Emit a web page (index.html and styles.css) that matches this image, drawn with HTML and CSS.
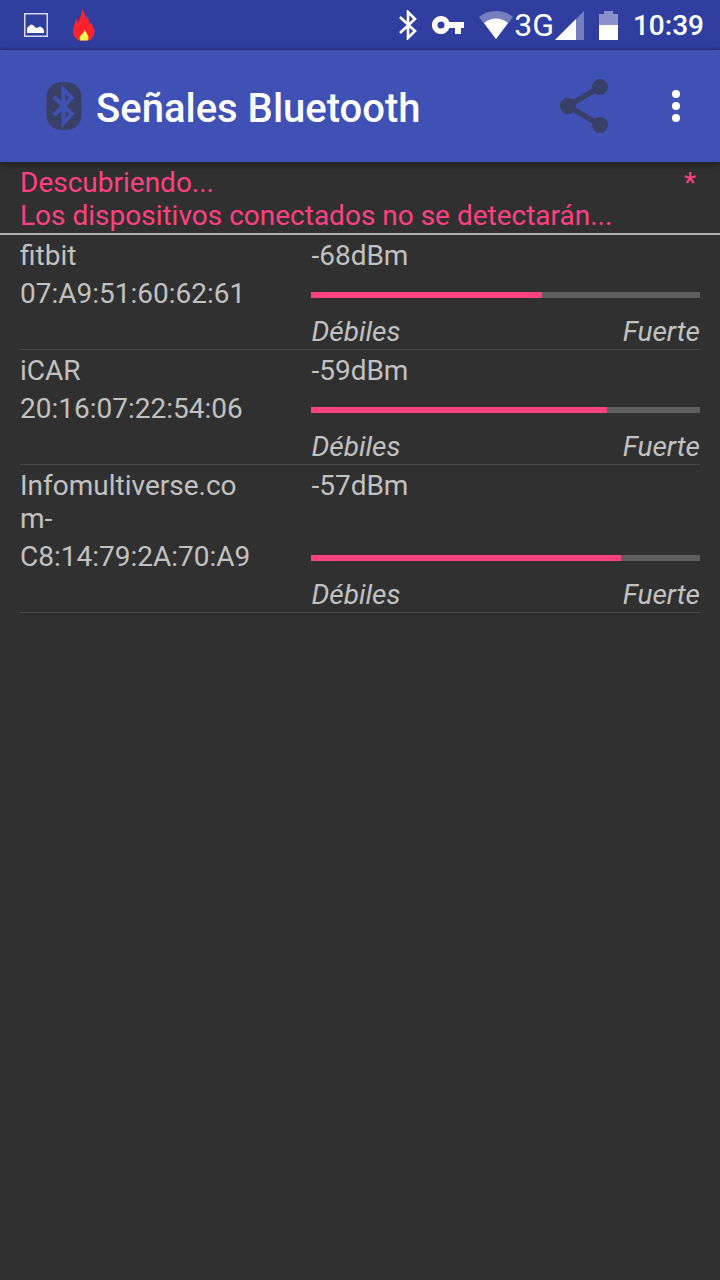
FILE: index.html
```html
<!DOCTYPE html>
<html lang="es">
<head>
    <meta charset="UTF-8">
    <meta name="viewport" content="width=device-width, initial-scale=1.0">
    <title>Señales Bluetooth</title>
    <link rel="stylesheet" href="styles.css">
</head>
<body>
    <div class="status-bar">
        <div class="notifications">
            <svg width="24" height="24" viewBox="0 0 24 24">
                <rect x="0.75" y="0.75" width="22.5" height="22.5" fill="none" stroke="#d6d9ec" stroke-width="1.5"/>
                <path d="M3 20v-5l2-2 2-1.500 2 .5 3 3 2-.5 2-1 2 1 2 2.500v3z" fill="#fff"/>
            </svg>
            <svg width="24" height="32" viewBox="0 0 24 32">
                <path d="M10.500 0C11 3 14 6 14.500 10L16 6c.5 5 1 7 2.500 9l1-2c0 4 3 6 3 10 0 4-3 6.500-5 8.500H6C3 29 1 26 1 22.500 1 18 3 15 4.500 9c.5 1.500 1 3 1.500 5l1.500-3C8.500 8 9.500 4 10.500 0z" fill="#ff212b"/>
                <path d="M12.500 21c2 3 4 5 4 8 0 1-.5 2-1 2.500H8c-1-3 0-5 2-6.500 1.500-1.500 2-2.500 2.500-4z" fill="#fff550"/>
            </svg>
        </div>
        <div class="system-icons">
            <svg width="18" height="30" viewBox="0 0 18 30">
                <path d="M1 7l15 14-7 7V2l7 7L1 23" fill="none" stroke="#fff" stroke-width="2.600"/>
            </svg>
            <svg width="32" height="18" viewBox="0 0 32 18">
                <path fill-rule="evenodd" fill="#fff" d="M9 0a9 9 0 0 1 8.400 6H32v6h-3v6h-6v-6h-5.600A9 9 0 1 1 9 0zm0 5.500a3.500 3.500 0 1 0 0 7 3.500 3.500 0 0 0 0-7z"/>
            </svg>
            <div class="network">
                <svg width="34" height="28" viewBox="0 0 34 28">
                    <path d="M17 28L0 6C9-2 25-2 34 6z" fill="#767fbe"/>
                    <path d="M17 28L5 12c7-6 17-6 24 0z" fill="#fff"/>
                </svg>
                <span class="network-type">3G</span>
                <svg width="29" height="29" viewBox="0 0 29 29">
                    <path d="M0 29L29 0v29z" fill="#767fbe"/>
                    <path d="M0 29L21 8v21z" fill="#fff"/>
                </svg>
            </div>
            <svg width="19" height="29" viewBox="0 0 19 29">
                <path d="M0 3h5V0h9v3h5v12H0z" fill="#8a91c8"/>
                <path d="M0 14h19v15H0z" fill="#fff"/>
            </svg>
            <span class="clock">10:39</span>
        </div>
    </div>

    <header class="app-bar">
        <svg width="36" height="48" viewBox="0 0 36 48">
            <path d="M18 0c12 0 17.500 6 17.500 16v16c0 10-5.500 16-17.500 16S.5 42 .5 32V16C.5 6 6 0 18 0z" fill="#394068"/>
            <path d="M8 15l18 17-8.500 9V7L26 16 8 33" fill="none" stroke="#3f51b5" stroke-width="3.800"/>
        </svg>
        <h1>Señales Bluetooth</h1>
        <button class="icon-button" type="button" aria-label="Compartir">
            <svg width="48" height="54" viewBox="0 0 48 54">
                <path d="M40 8L8 27l32 19" fill="none" stroke="#394068" stroke-width="5.500"/>
                <g fill="#394068">
                    <circle cx="40" cy="8" r="8"/>
                    <circle cx="8" cy="27" r="8"/>
                    <circle cx="40" cy="46" r="8"/>
                </g>
            </svg>
        </button>
        <button class="icon-button" type="button" aria-label="Más opciones">
            <svg width="8" height="32" viewBox="0 0 8 32" fill="#fff">
                <circle cx="4" cy="4" r="4"/>
                <circle cx="4" cy="16" r="4"/>
                <circle cx="4" cy="28" r="4"/>
            </svg>
        </button>
    </header>

    <main>
        <div class="scan-status">
            <p>Descubriendo...<br>Los dispositivos conectados no se detectarán...</p>
            <span>*</span>
        </div>

        <ul class="devices">
            <li class="device">
                <span class="name">fitbit</span>
                <span>-68dBm</span>
                <span>07:A9:51:60:62:61</span>
                <progress value="59.4" max="100" aria-label="Señal de fitbit"></progress>
                <div class="scale"><span>Débiles</span><span>Fuerte</span></div>
            </li>
            <li class="device">
                <span class="name">iCAR</span>
                <span>-59dBm</span>
                <span>20:16:07:22:54:06</span>
                <progress value="76.1" max="100" aria-label="Señal de iCAR"></progress>
                <div class="scale"><span>Débiles</span><span>Fuerte</span></div>
            </li>
            <li class="device">
                <span class="name">Infomultiverse.com-</span>
                <span>-57dBm</span>
                <span>C8:14:79:2A:70:A9</span>
                <progress value="79.7" max="100" aria-label="Señal de Infomultiverse.com-"></progress>
                <div class="scale"><span>Débiles</span><span>Fuerte</span></div>
            </li>
        </ul>
    </main>
</body>
</html>
```
FILE: styles.css
```css
body {
    font-family: Roboto, sans-serif;
    font-size: 28px;
    line-height: 33px;
    margin: 0;
    background-color: #303030;
    color: #c1c1c1;
}
svg {
    display: block;
    flex-shrink: 0;
}
.status-bar {
    display: flex;
    justify-content: space-between;
    align-items: center;
    height: 50px;
    padding: 0 16px 0 24px;
    background-color: #303f9f;
    color: white;
}
.notifications {
    display: flex;
    align-items: center;
    gap: 24px;
}
.system-icons {
    display: flex;
    align-items: center;
    gap: 15px;
}
.network {
    display: flex;
    align-items: center;
    gap: 1px;
}
.network-type {
    font-size: 32px;
}
.clock {
    font-weight: 500;
}
.app-bar {
    display: flex;
    align-items: center;
    height: 112px;
    padding: 0 24px 0 46px;
    background-color: #3f51b5;
    color: white;
    box-shadow: 0 2px 8px rgba(0, 0, 0, 0.4), 0 -1px 2px rgba(0, 0, 0, 0.2);
}
.app-bar h1 {
    flex: 1;
    margin: 0 0 0 14px;
    padding-top: 6px;
    font-size: 40px;
    font-weight: 500;
    line-height: 48px;
}
.icon-button {
    padding: 16px;
    border: none;
    background: none;
    cursor: pointer;
}
.app-bar .icon-button + .icon-button {
    margin-left: 32px;
}
.scan-status {
    display: flex;
    justify-content: space-between;
    padding: 4px 24px 1px 20px;
    border-bottom: 2px solid #b0b0b0;
    color: #ff4081;
}
.scan-status p {
    margin: 0;
}
.devices {
    list-style-type: none;
    margin: 0;
    padding: 0 20px;
}
.device {
    display: grid;
    grid-template-columns: 3fr 4fr;
    row-gap: 5px;
    padding: 4px 0 1px;
    border-bottom: 1px solid #484848;
}
.name {
    padding-right: 52px;
    overflow-wrap: anywhere;
}
.device progress {
    appearance: none;
    width: 100%;
    height: 6px;
    margin-top: 15px;
    border: none;
    background-color: #5e5e5e;
}
.device progress::-webkit-progress-bar {
    background-color: #5e5e5e;
}
.device progress::-webkit-progress-value {
    background-color: #ff4081;
}
.scale {
    grid-column: 2;
    display: flex;
    justify-content: space-between;
    font-style: italic;
}
```
